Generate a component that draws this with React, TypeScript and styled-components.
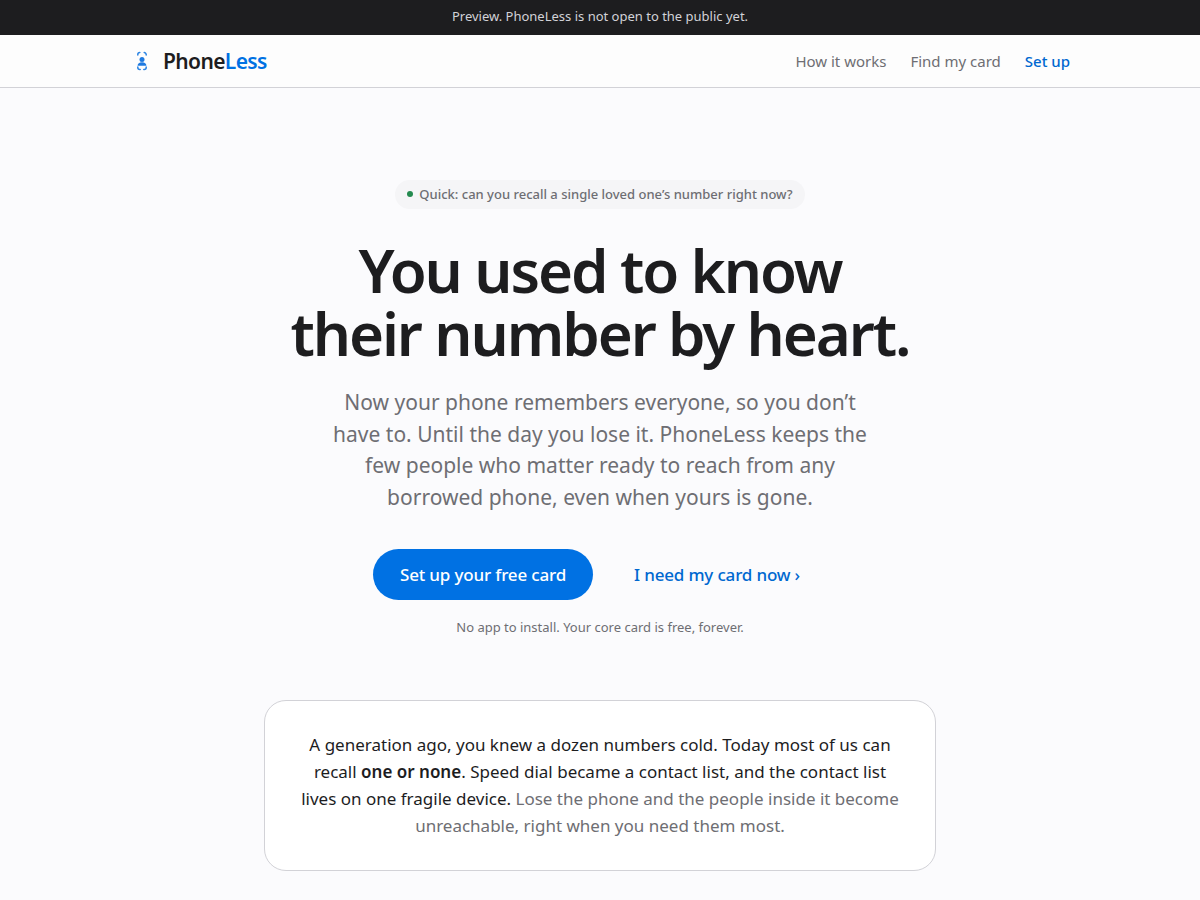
import React from "react";
import styled, { createGlobalStyle } from "styled-components";

const GlobalStyle = createGlobalStyle`
  *, *::before, *::after { box-sizing: border-box; }
  body {
    margin: 0;
    background: #fbfbfd;
    color: #1d1d1f;
    font-family: "Noto Sans", sans-serif;
    font-size: 17px;
    line-height: 27px;
  }
`;

const Banner = styled.div`
  padding: 6px 16px 9px;
  background: #1d1d1f;
  color: #d2d2d7;
  font-size: 13px;
  line-height: 20px;
  text-align: center;
`;

const Header = styled.header`
  background: #fdfdfd;
  border-bottom: 1px solid #d2d2d7;
`;

const HeaderInner = styled.div`
  display: flex;
  align-items: center;
  justify-content: space-between;
  max-width: 980px;
  height: 52px;
  margin: 0 auto;
  padding: 0 20px;
`;

const Brand = styled.a`
  display: flex;
  align-items: center;
  gap: 9px;
  color: #1d1d1f;
  font-size: 21px;
  font-weight: 600;
  line-height: 30px;
  letter-spacing: -0.03em;
  text-decoration: none;
`;

const BrandAccent = styled.span`
  color: #0071e3;
`;

const Nav = styled.nav`
  display: flex;
  gap: 24px;
`;

const NavLink = styled.a<{ $primary?: boolean }>`
  color: ${(p) => (p.$primary ? "#0068d0" : "#6e6e73")};
  font-size: 15px;
  font-weight: ${(p) => (p.$primary ? 500 : 400)};
  text-decoration: none;
`;

const Hero = styled.main`
  display: flex;
  flex-direction: column;
  align-items: center;
  padding: 92px 20px 64px;
  text-align: center;
`;

const Pill = styled.p`
  display: flex;
  align-items: center;
  gap: 6px;
  margin: 0 0 30px;
  padding: 4px 12px 5px;
  border-radius: 999px;
  background: #f5f5f7;
  color: #6e6e73;
  font-size: 13px;
  font-weight: 500;
  line-height: 20px;
`;

const Dot = styled.span`
  width: 6px;
  height: 6px;
  border-radius: 50%;
  background: #248a4f;
`;

const Title = styled.h1`
  margin: 0 0 22px;
  font-size: 60px;
  font-weight: 600;
  line-height: 63px;
  letter-spacing: -0.035em;
`;

const Lead = styled.p`
  max-width: 560px;
  margin: 0 0 36px;
  color: #6e6e73;
  font-size: 21px;
  line-height: 1.5;
`;

const Actions = styled.div`
  display: flex;
  flex-wrap: wrap;
  justify-content: center;
  gap: 14px;
`;

const Action = styled.a<{ $filled?: boolean }>`
  padding: 12px 27px;
  border-radius: 999px;
  background: ${(p) => (p.$filled ? "#0071e3" : "transparent")};
  color: ${(p) => (p.$filled ? "#ffffff" : "#0068d0")};
  font-weight: 500;
  letter-spacing: -0.01em;
  text-decoration: none;
`;

const Note = styled.p`
  margin: 16px 0 0;
  color: #6e6e73;
  font-size: 13px;
  line-height: 22px;
`;

const Card = styled.section`
  max-width: 672px;
  margin-top: 62px;
  padding: 30px 36px 31px;
  border: 1px solid #d2d2d7;
  border-radius: 22px;
  background: #ffffff;
`;

const CardText = styled.p`
  margin: 0;
`;

const Strong = styled.strong`
  font-weight: 600;
`;

const Muted = styled.span`
  color: #6e6e73;
`;

const Logo = () => (
  <svg width="24" height="24" viewBox="0 0 24 24" fill="none" aria-hidden="true">
    <g stroke="#2b84e3" strokeWidth="1.5" strokeLinecap="round">
      <path d="M7.8 6V5.6A2 2 0 0 1 9.8 3.6" />
      <path d="M14.2 3.6A2 2 0 0 1 16.2 5.6V6" />
      <path d="M7.8 18v.4a2 2 0 0 0 2 2h.4" />
      <path d="M13.8 20.4h.4a2 2 0 0 0 2-2V18" />
    </g>
    <circle cx="12" cy="10.6" r="2.5" fill="#1f7ae0" />
    <path d="M7.6 16.8c0-2.4 1.7-3.6 4.4-3.6s4.4 1.2 4.4 3.6z" fill="#1f7ae0" />
  </svg>
);

export default function App() {
  return (
    <>
      <GlobalStyle />
      <Banner>Preview. PhoneLess is not open to the public yet.</Banner>
      <Header>
        <HeaderInner>
          <Brand href="#">
            <Logo />
            <span>
              Phone<BrandAccent>Less</BrandAccent>
            </span>
          </Brand>
          <Nav>
            <NavLink href="#how">How it works</NavLink>
            <NavLink href="#find">Find my card</NavLink>
            <NavLink href="#setup" $primary>
              Set up
            </NavLink>
          </Nav>
        </HeaderInner>
      </Header>
      <Hero>
        <Pill>
          <Dot />
          Quick: can you recall a single loved one’s number right now?
        </Pill>
        <Title>
          You used to know
          <br />
          their number by heart.
        </Title>
        <Lead>
          Now your phone remembers everyone, so you don’t have to. Until the day you lose it. PhoneLess
          keeps the few people who matter ready to reach from any borrowed phone, even when yours is gone.
        </Lead>
        <Actions>
          <Action href="#setup" $filled>
            Set up your free card
          </Action>
          <Action href="#find">I need my card now ›</Action>
        </Actions>
        <Note>No app to install. Your core card is free, forever.</Note>
        <Card>
          <CardText>
            A generation ago, you knew a dozen numbers cold. Today most of us can recall{" "}
            <Strong>one or none</Strong>. Speed dial became a contact list, and the contact list lives on
            one fragile device.{" "}
            <Muted>
              Lose the phone and the people inside it become unreachable, right when you need them most.
            </Muted>
          </CardText>
        </Card>
      </Hero>
    </>
  );
}
